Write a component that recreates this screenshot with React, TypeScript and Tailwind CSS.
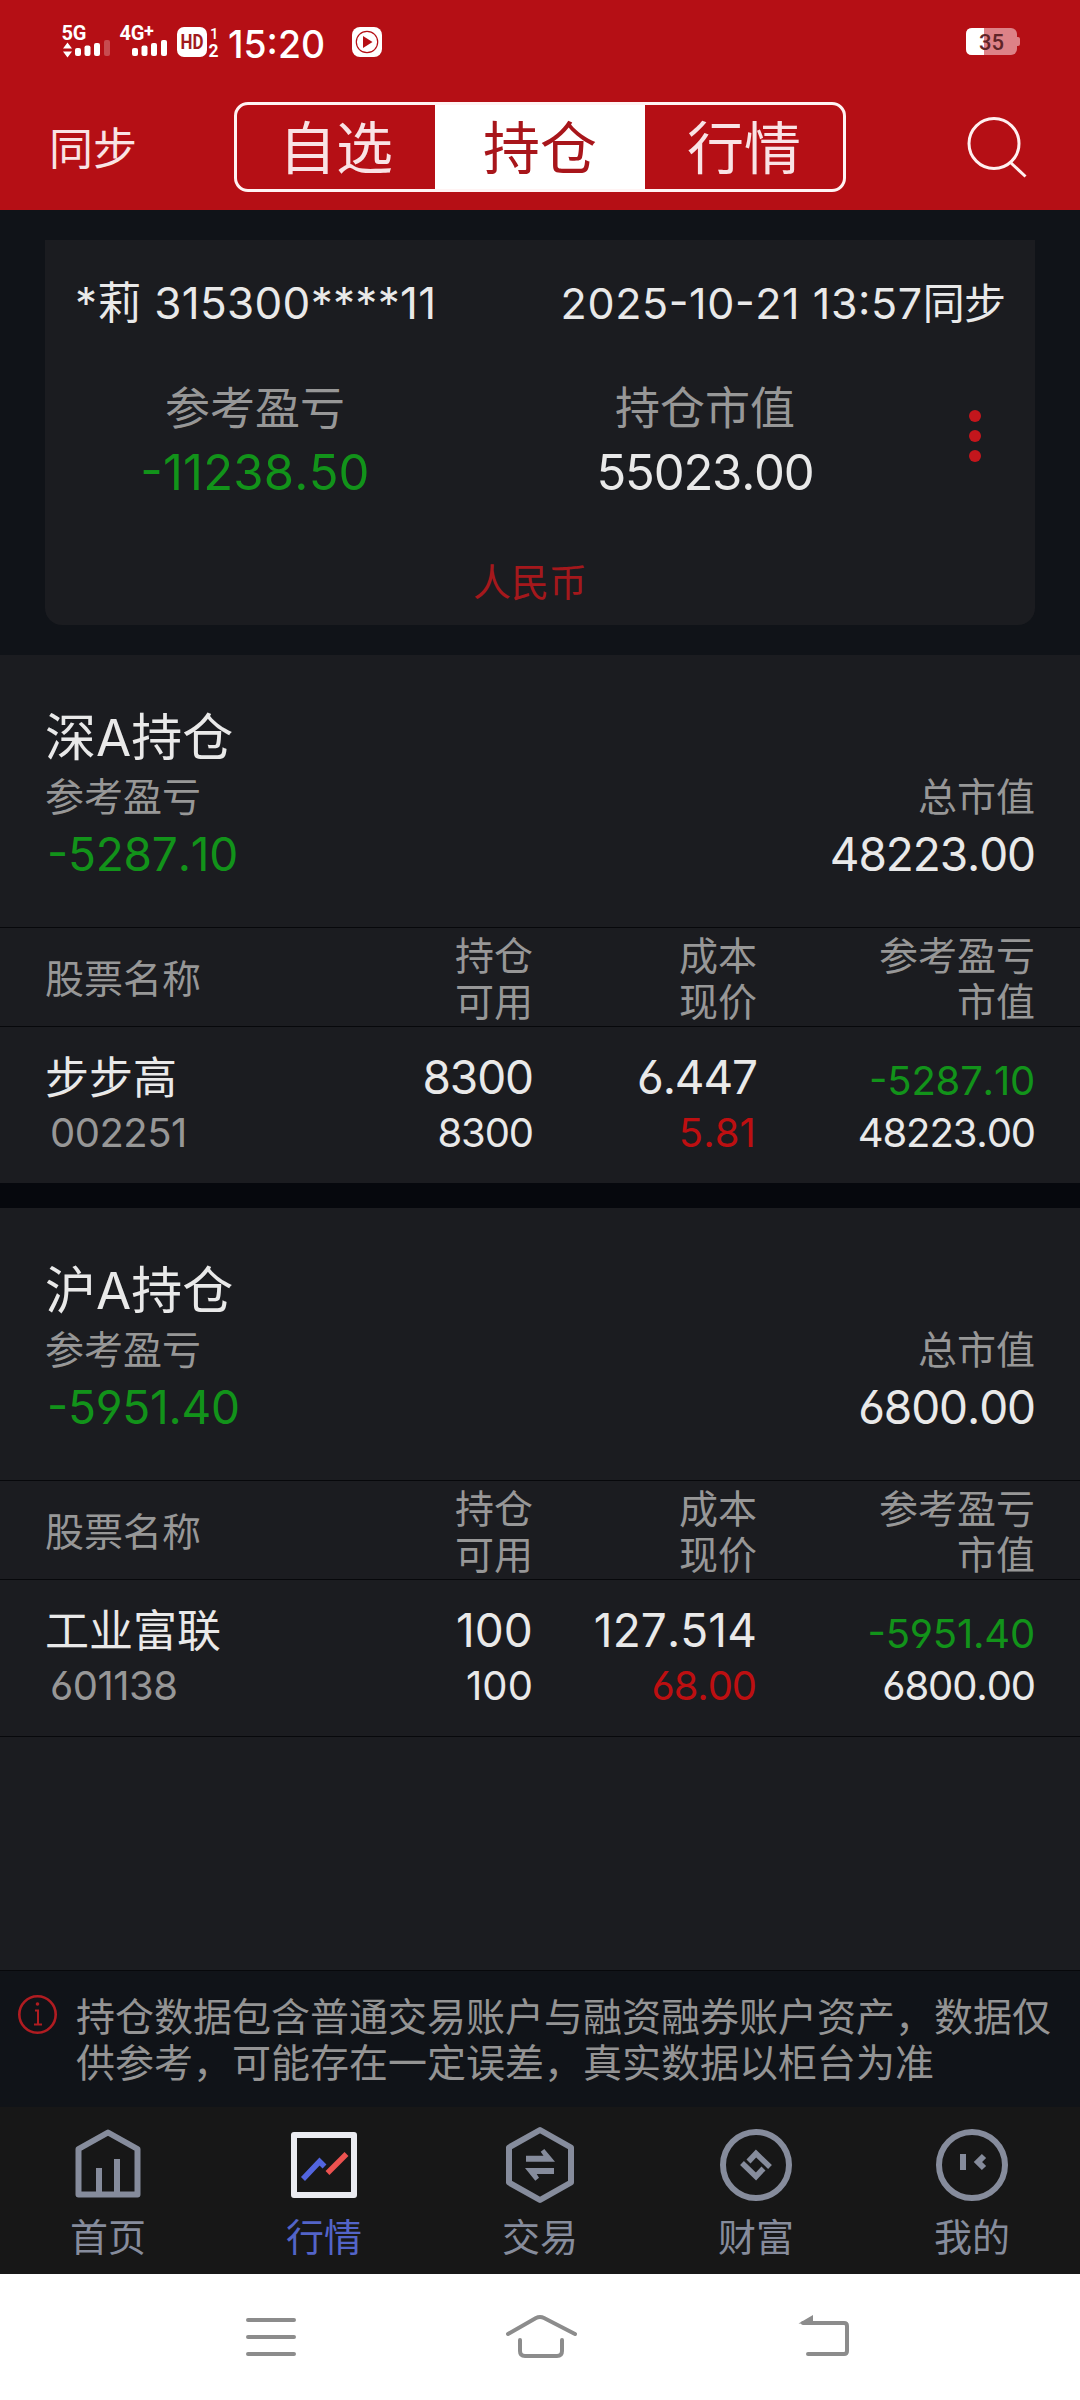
import React from 'react';

const ROW_GREEN = 'text-[#12931a]';

type Holding = {
  name: string;
  code: string;
  qty: string;
  cost: string;
  price: string;
  pnl: string;
  value: string;
};

function StatusBar() {
  return (
    <div className="flex h-[84px] items-center justify-between pl-[61px] pr-[58px]">
      <svg width="330" height="44" viewBox="61 22 330 44" className="mt-1 overflow-visible" fill="#fff">
        <g fontFamily="Roboto, sans-serif" fontWeight="700">
          <text x="61.5" y="39.5" fontSize="20" textLength="25">5G</text>
          <text x="119.5" y="39.5" fontSize="20" textLength="25">4G</text>
          <text x="144" y="37" fontSize="18">+</text>
          <text x="210" y="38.500" fontSize="15" fontWeight="500">1</text>
          <text x="208.500" y="56.500" fontSize="17.500">2</text>
        </g>
        <path d="M63 48.500l4.500-6 4.500 6zM63 51.500l4.500 6 4.500-6z" />
        <rect x="75" y="48" width="6" height="8" rx="2" />
        <rect x="84.500" y="45.500" width="6" height="10.500" rx="2" />
        <rect x="94" y="43" width="6" height="13" rx="2" />
        <rect x="104" y="40" width="6" height="16" rx="2" opacity=".25" />
        <rect x="132" y="48" width="6" height="8" rx="2" />
        <rect x="141.500" y="45.500" width="6" height="10.500" rx="2" />
        <rect x="151" y="43" width="6" height="13" rx="2" />
        <rect x="161" y="40" width="6" height="16" rx="2" />
        <rect x="177" y="27" width="30" height="30" rx="7" />
        <text
          x="180.500"
          y="49"
          fontSize="19.500"
          fontFamily="Roboto, sans-serif"
          fontWeight="700"
          textLength="23"
          lengthAdjust="spacingAndGlyphs"
          fill="#a01a1c"
        >
          HD
        </text>
        <text
          x="228"
          y="58"
          fontSize="38"
          fontFamily="Inter, sans-serif"
          fontWeight="500"
          textLength="97"
          lengthAdjust="spacingAndGlyphs"
        >
          15:20
        </text>
        <rect x="352" y="27" width="30" height="30" rx="8" />
        <circle cx="367" cy="42" r="10.700" fill="none" stroke="#b50f15" strokeWidth="1.200" />
        <path d="M363 36v12l9.500-6z" fill="#b50f15" />
      </svg>
      <svg width="56" height="28" viewBox="0 0 56 28">
        <rect x="0" y="0" width="51" height="27" rx="6" fill="#dd8287" />
        <path d="M51 9h1q2 0 2 2v5q0 2-2 2h-1z" fill="#dd8287" />
        <path d="M6 0h12v27H6q-6 0-6-6V6q0-6 6-6z" fill="#fff" />
        <text x="25.500" y="21.500" fontSize="22" textAnchor="middle" fontFamily="Roboto, sans-serif" fontWeight="500" fill="#5f2427">
          35
        </text>
      </svg>
    </div>
  );
}

function Header() {
  return (
    <header className="h-[210px] bg-[#b50f15] text-[#f9e3e5]">
      <StatusBar />
      <div className="flex h-[126px] items-start pt-[18px]">
        <div className="w-[234px] pl-[49px] text-[44px] leading-[94px]">同步</div>
        <div className="flex h-[90px] w-[612px] overflow-hidden rounded-[14px] border-[3px] border-[#fff3f3] text-[57px] leading-[88px]">
          <div className="w-[198px] text-center">自选</div>
          <div className="w-[210px] bg-white text-center text-[#a8161b]">持仓</div>
          <div className="w-[198px] text-center">行情</div>
        </div>
        <svg className="ml-[119px] mt-[12px]" width="64" height="66" viewBox="0 0 64 66" fill="none" stroke="#fff0f0" strokeWidth="3">
          <circle cx="29" cy="29.500" r="25" />
          <path d="M45.500 48.500l15 14" />
        </svg>
      </div>
    </header>
  );
}

function SummaryCard() {
  return (
    <div className="h-[445px] bg-[#101318] px-[45px] pt-[30px]">
      <div className="flex h-[385px] flex-col rounded-b-[17px] bg-[#1b1c20]">
        <div className="flex h-[126px] items-center justify-between pl-[30px] pr-[30px] text-[#e9e9e9]">
          <span className="text-[44px] tracking-[0.3px] [font-feature-settings:normal]">*莉 315300****11</span>
          <span className="text-[42px] tracking-[-0.9px]">
            <span className="text-[43px] tracking-[0.6px]">2025-10-21 13:57</span>同步
          </span>
        </div>
        <div className="flex h-[140px]">
          <div className="w-[420px] pt-[11px] text-center">
            <div className="text-[45px] leading-[64px] text-[#979797]">参考盈亏</div>
            <div className={`text-[49px] leading-[64px] tracking-[0.200px] ${ROW_GREEN}`}>-11238.50</div>
          </div>
          <div className="w-[480px] pt-[11px] text-center">
            <div className="text-[45px] leading-[64px] text-[#979797]">持仓市值</div>
            <div className="text-[49px] leading-[64px] tracking-[-1.2px] text-[#e9e9e9]">55023.00</div>
          </div>
          <div className="flex w-[60px] flex-col items-center gap-[8px] pt-[43.500px]">
            <i className="h-[12px] w-[12px] rounded-full bg-[#c4161c]" />
            <i className="h-[12px] w-[12px] rounded-full bg-[#c4161c]" />
            <i className="h-[12px] w-[12px] rounded-full bg-[#c4161c]" />
          </div>
        </div>
        <div className="mr-[20px] pt-[46px] text-center text-[38px] leading-[60px] text-[#a5181c]">人民币</div>
      </div>
    </div>
  );
}

function Pair({ a, b, width }: { a: string; b: string; width: string }) {
  return (
    <div className={`${width} text-right`}>
      <div>{a}</div>
      <div>{b}</div>
    </div>
  );
}

const figureTracking = (value: string) => (value.includes('1') ? 'tracking-[0.1px]' : 'tracking-[-1.1px]');

function Section({ title, pnl, total, h }: { title: string; pnl: string; total: string; h: Holding }) {
  return (
    <section className="h-[528px]">
      <div className="h-[272px] px-[45px] pt-[53px]">
        <div className="text-[51px] leading-[60px] text-[#e9e9e9]">{title}</div>
        <div className="flex justify-between text-[39px] leading-[57px] text-[#979797]">
          <span>参考盈亏</span>
          <span>总市值</span>
        </div>
        <div className="flex justify-between text-[46px] leading-[58px] tracking-[-1.1px]">
          <span className={`pl-[2px] tracking-[-0.200px] ${ROW_GREEN}`}>{pnl}</span>
          <span className="text-[#e9e9e9]">{total}</span>
        </div>
      </div>
      <div className="flex h-[99px] items-center border-t border-[#07080b] px-[45px] pt-[3px] text-[39px] leading-[46px] text-[#979797]">
        <div className="w-[248px]">股票名称</div>
        <Pair a="持仓" b="可用" width="w-[240px]" />
        <Pair a="成本" b="现价" width="w-[224px]" />
        <Pair a="参考盈亏" b="市值" width="w-[278px]" />
      </div>
      <div className="flex h-[157px] border-t border-[#07080b] px-[45px] pt-[22px] tracking-[-1.1px] text-[#e9e9e9]">
        <div className="w-[248px]">
          <div className="h-[56px] text-[44px] leading-[58px] tracking-normal">{h.name}</div>
          <div className="pl-[5px] text-[40px] leading-[56px] tracking-[-0.5px] text-[#979797]">{h.code}</div>
        </div>
        <div className={`w-[240px] text-right ${figureTracking(h.qty)}`}>
          <div className="text-[46px] leading-[56px]">{h.qty}</div>
          <div className="text-[40px] leading-[56px]">{h.qty}</div>
        </div>
        <div className="w-[224px] text-right">
          <div className={`text-[46px] leading-[56px] ${figureTracking(h.cost)}`}>{h.cost}</div>
          <div className={`pr-[1px] text-[40px] leading-[56px] text-[#bd0f11] ${figureTracking(h.price)}`}>{h.price}</div>
        </div>
        <div className="w-[278px] pt-[6px] text-right">
          <div className={`text-[40px] leading-[52px] tracking-[-0.200px] ${ROW_GREEN}`}>{h.pnl}</div>
          <div className="text-[40px] leading-[52px]">{h.value}</div>
        </div>
      </div>
    </section>
  );
}

function Notice() {
  return (
    <div className="flex h-[137px] border-t border-[#07080b] bg-[#101318] pl-[17px] pt-[23px]">
      <svg width="41" height="41" viewBox="0 0 41 41" fill="none" stroke="#b01c21">
        <circle cx="20.500" cy="20.500" r="18.200" strokeWidth="2.600" />
        <path d="M18 16.500h3V30M17 30.500h8" strokeWidth="2" />
        <circle cx="20.500" cy="10" r="1.800" fill="#b01c21" stroke="none" />
      </svg>
      <p className="ml-[18px] whitespace-nowrap text-[39px] leading-[46px] text-[#949494]">
        持仓数据包含普通交易账户与融资融券账户资产，数据仅
        <br />
        供参考，可能存在一定误差，真实数据以柜台为准
      </p>
    </div>
  );
}

const tabs = [
  {
    label: '首页',
    icon: (
      <g strokeLinejoin="round">
        <path d="M10.500 24L40 7.500l29.500 16.500v45.500h-59z" />
        <path d="M31 43v26M49 34v35" />
      </g>
    ),
  },
  {
    label: '行情',
    icon: (
      <g strokeLinejoin="round">
        <rect x="10" y="10" width="60" height="60" stroke="#eaebf0" />
        <path d="M19 54l16.500-17.500 5 5" stroke="#5265df" strokeWidth="5.500" strokeLinejoin="miter" />
        <path d="M43.500 48L62.500 29" stroke="#ec5250" strokeWidth="5.500" />
      </g>
    ),
  },
  {
    label: '交易',
    icon: (
      <g strokeLinejoin="round">
        <path d="M40 5L71 22.500v35L40 75 9 57.500v-35z" />
        <path
          d="M26 30.700h17.500l-2.800-4 3.600-2.700L55 36.700H26zM54 43H25l10.300 12.700 3.700-3-2.300-3.700H54z"
          fill="#868c9c"
          stroke="none"
        />
      </g>
    ),
  },
  {
    label: '财富',
    icon: (
      <g>
        <circle cx="40" cy="40" r="33" />
        <path d="M32.500 36.500L40 28.500l14 13.500M47.500 43.500L40 51.500 26 38" strokeWidth="5.500" />
      </g>
    ),
  },
  {
    label: '我的',
    icon: (
      <g>
        <circle cx="40" cy="40" r="33" />
        <path d="M31 29v16M52 31l-6 6 6 6" />
      </g>
    ),
  },
];

function TabBar() {
  return (
    <nav className="flex h-[167px] bg-[#171717]">
      {tabs.map((t, i) => (
        <div key={t.label} className={`flex w-[216px] flex-col items-center pt-[18px] ${i === 1 ? 'text-[#5364c8]' : 'text-[#868c9c]'}`}>
          <svg width="80" height="80" viewBox="0 0 80 80" fill="none" stroke="#868c9c" strokeWidth="6">
            {t.icon}
          </svg>
          <div className="text-[38px] leading-[64px]">{t.label}</div>
        </div>
      ))}
    </nav>
  );
}

function SystemNav() {
  return (
    <div className="flex h-[126px] items-start bg-white pt-[38px]">
      <svg className="ml-[241px]" width="60" height="54" viewBox="0 0 60 54" fill="none" stroke="#8c8c8c" strokeWidth="4" strokeLinecap="round">
        <path d="M7 8h46M7 25h46M7 42h46" />
      </svg>
      <svg className="ml-[199px]" width="80" height="54" viewBox="0 0 80 54" fill="none" stroke="#8c8c8c" strokeWidth="4" strokeLinecap="round" strokeLinejoin="round">
        <path d="M8 22L36 6q4-2 8 0l31 16M20 28v11q0 5 5 5h32q5 0 5-5V28" />
      </svg>
      <svg className="ml-[215px]" width="60" height="54" viewBox="0 0 60 54" fill="none" stroke="#8c8c8c" strokeWidth="4" strokeLinecap="round">
        <path d="M8 11h41q3 0 3 3v25q0 3-3 3H13" />
        <path d="M3.500 11.500L18 3v9.500z" fill="#8c8c8c" stroke="none" />
      </svg>
    </div>
  );
}

export default function App() {
  return (
    <div className="flex h-[2400px] w-[1080px] flex-col overflow-hidden bg-[#1b1c20] font-['Inter','Noto_Sans_CJK_SC',sans-serif] [font-feature-settings:'case','cv03','cv04'] [font-kerning:none]">
      <Header />
      <SummaryCard />
      <Section
        title="深A持仓"
        pnl="-5287.10"
        total="48223.00"
        h={{ name: '步步高', code: '002251', qty: '8300', cost: '6.447', price: '5.81', pnl: '-5287.10', value: '48223.00' }}
      />
      <div className="h-[25px] bg-[#06080d]" />
      <Section
        title="沪A持仓"
        pnl="-5951.40"
        total="6800.00"
        h={{ name: '工业富联', code: '601138', qty: '100', cost: '127.514', price: '68.00', pnl: '-5951.40', value: '6800.00' }}
      />
      <div className="h-[234px] border-t border-[#07080b]" />
      <Notice />
      <TabBar />
      <SystemNav />
    </div>
  );
}
